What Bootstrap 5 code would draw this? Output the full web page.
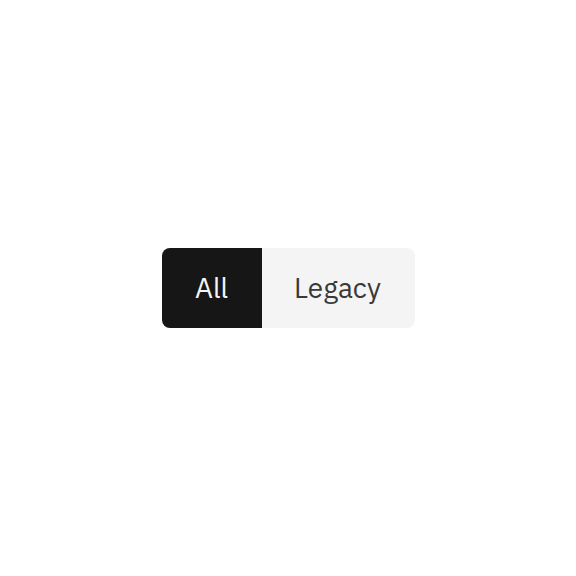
<!DOCTYPE html>
<html lang="en">
<head>
<meta charset="utf-8">
<meta name="viewport" content="width=device-width, initial-scale=1">
<title>Content switcher</title>
<link href="https://cdn.jsdelivr.net/npm/bootstrap@5.3.0/dist/css/bootstrap.min.css" rel="stylesheet">
<style>
.switcher .switcher-tab {
  --bs-btn-padding-x: 32px;
  --bs-btn-padding-y: 20px;
  --bs-btn-font-size: 28px;
  --bs-btn-line-height: 40px;
  --bs-btn-border-width: 0;
  --bs-btn-border-radius: 8px;
  --bs-btn-color: #393939;
  --bs-btn-bg: #f4f4f4;
  --bs-btn-hover-bg: #e5e5e5;
  --bs-btn-active-color: #f4f4f4;
  --bs-btn-active-bg: #161616;
  font-family: "IBM Plex Sans", "Noto Sans", sans-serif;
  min-width: 100px;
}
.switcher .switcher-wide { min-width: 154px; }
</style>
</head>
<body class="bg-white">
<main class="min-vh-100 d-flex align-items-center justify-content-center">
  <div class="btn-group switcher" role="group" aria-label="Filter">
    <button type="button" class="btn switcher-tab active" aria-pressed="true">All</button>
    <button type="button" class="btn switcher-tab switcher-wide" aria-pressed="false">Legacy</button>
  </div>
</main>
<script src="https://cdn.jsdelivr.net/npm/bootstrap@5.3.0/dist/js/bootstrap.bundle.min.js"></script>
</body>
</html>
